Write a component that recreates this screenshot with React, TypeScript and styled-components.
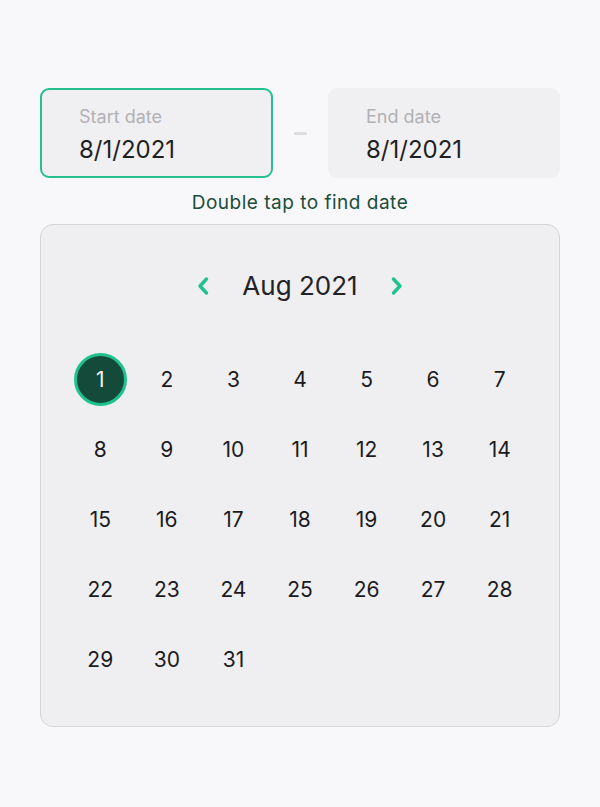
import React from "react";
import styled, { createGlobalStyle } from "styled-components";

const Global = createGlobalStyle`
  html, body { margin: 0; padding: 0; background: #f8f7fa; }
  body { font-family: Inter, "Noto Sans", sans-serif; }
`;

const Page = styled.div`
  width: 520px;
  padding: 88px 40px 0 40px;
  display: flex;
  flex-direction: column;
`;

const Inputs = styled.div`
  display: grid;
  grid-template-columns: 233px 1fr 232px;
  align-items: center;
  height: 90px;
`;

const Field = styled.div<{ $active?: boolean }>`
  box-sizing: border-box;
  height: 90px;
  border-radius: 9px;
  background: #f0eff2;
  border: 2px solid ${(p) => (p.$active ? "#23c28d" : "#f0eff2")};
  padding: 16px 0 0 ${(p) => (p.$active ? 37 : 36)}px;
  display: flex;
  flex-direction: column;
  gap: 7px;
`;

const Label = styled.div`
  font-size: 18px;
  color: #b2b1b5;
  line-height: 22px;
`;

const Value = styled.div`
  font-size: 24px;
  color: #1f1f22;
  line-height: 29px;
`;

const Dash = styled.div`
  justify-self: center;
  width: 13px;
  height: 3px;
  border-radius: 1px;
  background: #dcdbde;
`;

const Hint = styled.div`
  text-align: center;
  margin-top: 13px;
  font-size: 19px;
  line-height: 24px;
  color: #1a4d3b;
  letter-spacing: 0.5px;
`;

const Calendar = styled.div`
  box-sizing: border-box;
  margin-top: 9px;
  height: 503px;
  border: 1px solid #d6d5d9;
  border-radius: 13px;
  background: #efeef1;
  padding: 0 26px;
`;

const Header = styled.div`
  height: 119px;
  display: flex;
  align-items: center;
  justify-content: center;
  gap: 27px;
  box-sizing: border-box;
  padding-top: 2px;
`;

const Title = styled.div`
  font-size: 26px;
  color: #232226;
  width: 124px;
  text-align: center;
`;

const Nav = styled.button`
  border: none;
  background: none;
  padding: 0;
  width: 16px;
  height: 24px;
  display: flex;
  align-items: center;
  justify-content: center;
  cursor: pointer;
`;

const Grid = styled.div`
  display: grid;
  grid-template-columns: repeat(7, 1fr);
  grid-auto-rows: 70px;
`;

const Day = styled.div<{ $selected?: boolean }>`
  display: flex;
  align-items: center;
  justify-content: center;
  font-size: 21px;
  color: #1b1b1e;
  & > span {
    box-sizing: border-box;
    width: 53px;
    height: 53px;
    border-radius: 50%;
    display: flex;
    align-items: center;
    justify-content: center;
    background: ${(p) => (p.$selected ? "#134a39" : "transparent")};
    border: ${(p) => (p.$selected ? "3px solid #20c28b" : "none")};
    color: ${(p) => (p.$selected ? "#f4f4f4" : "#1b1b1e")};
  }
`;

const Chevron = ({ dir }: { dir: "left" | "right" }) => (
  <svg width="14" height="20" viewBox="0 0 14 20">
    <path
      d={dir === "left" ? "M10.5 3 L4 10 L10.5 17" : "M3.5 3 L10 10 L3.5 17"}
      fill="none"
      stroke="#1fc28b"
      strokeWidth="3.4"
      strokeLinecap="round"
      strokeLinejoin="round"
    />
  </svg>
);

export default function App() {
  const days = Array.from({ length: 31 }, (_, i) => i + 1);
  return (
    <>
      <Global />
      <Page>
        <Inputs>
          <Field $active>
            <Label>Start date</Label>
            <Value>8/1/2021</Value>
          </Field>
          <Dash />
          <Field>
            <Label>End date</Label>
            <Value>8/1/2021</Value>
          </Field>
        </Inputs>
        <Hint>Double tap to find date</Hint>
        <Calendar>
          <Header>
            <Nav aria-label="Previous month">
              <Chevron dir="left" />
            </Nav>
            <Title>Aug 2021</Title>
            <Nav aria-label="Next month">
              <Chevron dir="right" />
            </Nav>
          </Header>
          <Grid>
            {days.map((d) => (
              <Day key={d} $selected={d === 1}>
                <span>{d}</span>
              </Day>
            ))}
          </Grid>
        </Calendar>
      </Page>
    </>
  );
}
